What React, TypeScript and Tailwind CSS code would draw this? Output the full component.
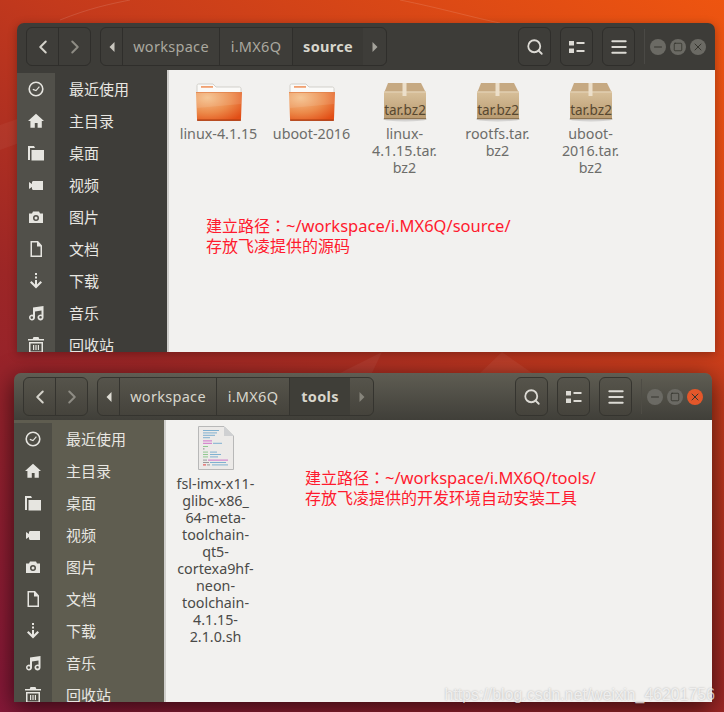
import { useId } from "react";
import { ChevronLeft, ChevronRight, Menu, Minus, Search, Square, X } from "lucide-react";

const PLACES = ["最近使用", "主目录", "桌面", "视频", "图片", "文档", "下载", "音乐", "回收站"];

function PlaceIcon({ index }: { index: number }) {
  const shapes = [
    <g key="recent">
      <circle cx="8" cy="8" r="6.8" fill="none" stroke="currentColor" strokeWidth="1.6" />
      <path d="M4.800 8.400 8 9.600l3.400-4" fill="none" stroke="currentColor" strokeWidth="1.200" />
    </g>,
    <path key="home" d="M8 .8 16 8h-2.200v6.800H9.600V10H6.800v4.800H2.400V8H0z" fill="currentColor" />,
    <path key="desk" d="M0 1h6l1 2h-5v12H0zM3.500 5H16v10.500H3.500z" fill="currentColor" />,
    <path key="video" d="M1 5l3 2V5.500C4 4.700 4.600 4 5.400 4H15v9H5.400C4.600 13 4 12.300 4 11.500V10l-3 2z" fill="currentColor" />,
    <path key="camera" fillRule="evenodd" d="M5 2.500h6L12 4.500h3V14H1V4.500h3zM8 6a3 3 0 1 0 0 6 3 3 0 0 0 0-6zm0 1.500a1.500 1.500 0 1 1 0 3 1.500 1.500 0 0 1 0-3z" fill="currentColor" />,
    <path key="doc" fillRule="evenodd" d="M2.500 0H10l4 4.500V16H2.500zM4 1.500v13h8.500V5.500H9v-4z" fill="currentColor" />,
    <g key="down" fill="currentColor">
      <rect x="7" y="0" width="2" height="2" />
      <rect x="7" y="3.500" width="2" height="2" />
      <path d="M7 7h2v4.500L12.500 8 14 9.500 8 15.500 2 9.500 3.500 8 7 11.500z" />
    </g>,
    <path key="music" fillRule="evenodd" d="M5 2.500 15.500 1v11.500a3 3 0 1 1-2-2.800V5.500L7 6.500v6a3 3 0 1 1-2-2.800zM3.800 11.300a1.300 1.300 0 1 0 0 2.600 1.300 1.300 0 0 0 0-2.600zm8.700-.3a1.300 1.300 0 1 0 0 2.600 1.300 1.300 0 0 0 0-2.600z" fill="currentColor" />,
    <path key="trash" fillRule="evenodd" d="M5.500 0h5l.8 2H16v1.500H0V2h4.700zM1 5h14v11H1zM2.500 6.500v8h11v-8zM5 8h1.200v5H5zm2.400 0h1.200v5H7.400zm2.400 0H11v5H9.800z" fill="currentColor" />,
  ];
  return (
    <svg viewBox="0 0 16 16" className="h-4 w-4 text-[#e6e5e0]">
      {shapes[index]}
    </svg>
  );
}

function FolderIcon() {
  const id = useId();
  return (
    <svg viewBox="0 0 46 38" className="h-[38px] w-[46px]">
      <defs>
        <radialGradient id={id} cx="0.25" cy="0.2" r="0.95">
          <stop offset="0" stopColor="#f4c08a" />
          <stop offset="0.55" stopColor="#ec8a4a" />
          <stop offset="1" stopColor="#e24e16" />
        </radialGradient>
      </defs>
      <path d="M1 2.500c0-.8.600-1.500 1.500-1.500H17l3 3h23.500c.8 0 1.500.7 1.500 1.500V12H1z" fill="#fbfaf8" stroke="#c9c6c0" strokeWidth="0.8" />
      <rect x="5" y="3" width="12" height="1.800" fill="#f0a070" />
      <path d="M0 9h46l-1 27c0 1-.8 1.800-1.800 1.800H2.800C1.800 37.800 1 37 1 36z" fill={`url(#${id})`} />
      <path d="M.3 10h45.400l-.5 11L1 25z" fill="#fff" opacity="0.1" />
      <path d="M0 9h46v.8H0z" fill="#e08550" />
      <path d="M1 36.500h44v1.300H1z" fill="#a83a10" />
    </svg>
  );
}

function ArchiveIcon() {
  const id = useId();
  return (
    <svg viewBox="0 0 44 40" className="h-10 w-11">
      <defs>
        <linearGradient id={id} x1="0" y1="0" x2="0" y2="1">
          <stop offset="0" stopColor="#d8c09a" />
          <stop offset="1" stopColor="#b89a70" />
        </linearGradient>
      </defs>
      <ellipse cx="22" cy="37" rx="22" ry="2.500" fill="#000" opacity="0.12" />
      <path d="M5 1h33l4.500 9h-41z" fill="#c6a982" />
      <rect x="1" y="9.500" width="42" height="27.500" fill={`url(#${id})`} />
      <rect x="1" y="9.500" width="42" height="1" fill="#e6d6bc" />
      <rect x="19.500" y="1" width="4" height="13" fill="#ecdfca" />
      <rect x="1" y="36" width="42" height="1.200" fill="#8d7350" />
      <text x="22" y="33" textAnchor="middle" className="fill-[#57472f] font-['Noto_Sans',sans-serif] text-[13.500px]">
        tar.bz2
      </text>
    </svg>
  );
}

function ScriptIcon() {
  const lines: [number, number, number, string][] = [
    [5, 5, 16, "#7fb0d0"], [5, 8, 14, "#7fb0d0"], [5, 11, 12, "#7fb0d0"], [5, 14, 7, "#7fb0d0"],
    [5, 18, 9, "#d070c8"], [5, 21, 9, "#d070c8"], [15, 21, 9, "#7fb0d0"], [5, 25, 5, "#90c890"], [5, 28, 1.500, "#888888"],
    [5, 32, 5, "#90c890"], [12, 32, 7, "#7fb0d0"], [5, 35, 5, "#90c890"], [12, 35, 11, "#7fb0d0"],
    [5, 38, 5, "#90c890"], [12, 38, 8, "#7fb0d0"], [5, 42, 4, "#999999"], [10, 42, 20, "#d070c8"],
    [5, 45, 6, "#999999"], [12, 45, 16, "#7fb0d0"], [5, 48, 3, "#e04040"], [9, 48, 3, "#999999"], [14, 48, 16, "#7fb0d0"],
  ];
  return (
    <svg viewBox="0 0 36 44" className="h-11 w-9">
      <path d="M.500.500H26L35.500 10v33.500H.500z" fill="#eceae8" stroke="#b8b8b8" />
      <path d="M26 .500V10h9.500z" fill="#cfd0d2" />
      {lines.map(([x, y, w, c], i) => (
        <rect key={i} x={x} y={y * 0.8} width={w} height="1" fill={c} />
      ))}
    </svg>
  );
}

function ViewIcon() {
  return (
    <svg viewBox="0 0 16 16" className="h-4 w-4 text-[#dcdad4]">
      <path d="M0 2h5v4.500H0zM0 9.500h5V14H0zM7.500 3h8v2h-8zM7.500 11h8v2h-8z" fill="currentColor" />
    </svg>
  );
}

function PathArrow({ dir, className }: { dir: "left" | "right"; className: string }) {
  return (
    <svg viewBox="0 0 6 10" className={`h-2.5 w-1.5 ${className}`}>
      <path d={dir === "left" ? "M5.500 0v10L.5 5z" : "M.5 0v10l5-5z"} fill="currentColor" />
    </svg>
  );
}

type Item = { name: string[]; kind: "folder" | "archive" | "script" };

type WindowProps = {
  focused: boolean;
  current: string;
  currentWidth: string;
  items: Item[];
  left: string;
  top: string;
  note: [string, string];
  notePos: string;
};

function FileWindow({ focused, current, currentWidth, items, left, top, note, notePos }: WindowProps) {
  const border = focused ? "border-[#35342f]" : "border-[#2f2e2b]";
  const fill = focused ? "bg-[linear-gradient(#56544b,#45433c)]" : "bg-[#3e3d39]";
  const pathText = focused ? "text-[#d8d6cc]" : "text-[#aaa89f]";
  const btn = `flex h-[39px] w-[33px] items-center justify-center rounded-md border ${border} ${fill}`;

  return (
    <section className={`absolute ${left} ${top} flex h-[329px] w-[698px] flex-col overflow-hidden rounded-t-[7px] font-['Noto_Sans','Noto_Sans_CJK_SC',sans-serif] ${focused ? "shadow-[0_6px_24px_rgba(0,0,0,0.65)]" : "shadow-[0_2px_10px_rgba(0,0,0,0.3)]"}`}>
      {/* Header */}
      <header className={`flex h-[47px] shrink-0 items-center pl-[9px] pr-[9px] ${focused ? "bg-[linear-gradient(#5f5d53,#403f39)]" : "bg-[#3d3c38]"}`}>
        <div className={`flex h-[39px] w-[65px] rounded-md border ${border} ${fill}`}>
          <span className={`flex flex-1 items-center justify-center border-r ${border}`}>
            <ChevronLeft className="h-[22px] w-[22px] text-[#d4d2ca]" strokeWidth={2.2} />
          </span>
          <span className="flex flex-1 items-center justify-center">
            <ChevronRight className="h-[22px] w-[22px] text-[#8e8c84]" strokeWidth={2.2} />
          </span>
        </div>

        <nav className={`ml-[9px] flex h-[39px] rounded-md border ${border} ${fill} text-[14.500px] tracking-[0.3px]`}>
          <span className={`flex w-[22px] items-center justify-center border-r ${border}`}>
            <PathArrow dir="left" className={focused ? "text-[#dedcd4]" : "text-[#c9c7bf]"} />
          </span>
          <span className={`flex w-[97px] items-center justify-center border-r ${border} ${pathText}`}>workspace</span>
          <span className={`flex w-[73px] items-center justify-center border-r ${border} ${pathText}`}>i.MX6Q</span>
          <span className={`flex ${currentWidth} items-center justify-center font-bold text-[#d8d6cc] ${focused ? "bg-[#3f3e38]" : "bg-[#3a3935]"}`}>{current}</span>
          <span className="flex w-[23px] items-center justify-center">
            <PathArrow dir="right" className={focused ? "text-[#87857c]" : "text-[#a5a39b]"} />
          </span>
        </nav>

        <div className="ml-auto flex items-center">
          <span className={btn}><Search className="h-[18px] w-[18px] text-[#dcdad4]" strokeWidth={2.4} /></span>
          <span className={`${btn} ml-[9px]`}><ViewIcon /></span>
          <span className={`${btn} ml-[9px]`}><Menu className="h-[20px] w-[20px] text-[#dcdad4]" strokeWidth={2.4} /></span>
          <span className={`ml-[9px] h-[35px] w-px ${focused ? "bg-[#4e4c45]" : "bg-[#4a4945]"}`} />
          <div className="ml-[5px] flex gap-1">
            <span className="flex h-4 w-4 items-center justify-center rounded-full bg-[#6b6a64]"><Minus className="h-3 w-3 text-[#36352f]" /></span>
            <span className="flex h-4 w-4 items-center justify-center rounded-full bg-[#6b6a64]"><Square className="h-2.5 w-2.5 text-[#36352f]" /></span>
            <span className={`flex h-4 w-4 items-center justify-center rounded-full ${focused ? "bg-[#e4572a]" : "bg-[#6b6a64]"}`}><X className="h-3 w-3 text-[#36352f]" /></span>
          </div>
        </div>
      </header>

      <div className="flex min-h-0 flex-1">
        {/* Sidebar */}
        <aside className={`flex w-[150px] shrink-0 flex-col overflow-hidden pt-[3px] text-[15px] ${focused ? "bg-[#5f5d50]" : "bg-[#3e3d39]"}`}>
          {PLACES.map((place, i) => (
            <div key={place} className="flex h-8 shrink-0 items-center">
              <span className={`flex h-8 w-[38px] shrink-0 items-center justify-center ${focused ? "bg-[#4e4d45]" : "bg-[#51504a]"}`}>
                <PlaceIcon index={i} />
              </span>
              <span className="pl-[14px] text-[#e8e7e2]">{place}</span>
            </div>
          ))}
        </aside>
        <div className="w-0.5 shrink-0 bg-[#cfcecb]" />

        {/* Files */}
        <main className="relative flex flex-1 items-start bg-[#f2f1ef] pl-[3px] pt-[11px] text-[14.300px] leading-[17px]">
          {items.map((item) => (
            <div key={item.name.join("")} className={`flex w-[93px] shrink-0 flex-col items-center text-center ${focused ? "text-[#4a4a48]" : "text-[#6d6d6a]"}`}>
              {item.kind === "script" ? (
                <div className="-mt-[5px] flex h-11 items-center"><ScriptIcon /></div>
              ) : (
                <div className="flex h-[42px] items-center">
                  {item.kind === "folder" ? <FolderIcon /> : <ArchiveIcon />}
                </div>
              )}
              <div className={item.kind === "script" ? "mt-[5px]" : "mt-[2px]"}>
                {item.name.map((line, i) => <div key={i}>{line}</div>)}
              </div>
            </div>
          ))}
          <div className={`absolute ${notePos} text-[16px] leading-5 text-[#ff1a2e]`}>
            <div>
              建立路径<span className="font-['Noto_Sans_CJK_TC',sans-serif]">：</span>
              <span className="text-[16.500px]">{note[0]}</span>
            </div>
            <div>{note[1]}</div>
          </div>
        </main>
      </div>
    </section>
  );
}

export default function App() {
  return (
    <div className="relative h-[712px] w-[724px] overflow-hidden bg-[linear-gradient(212deg,#ee5510_0%,#c43a1c_36%,#9c2626_62%,#851838_100%)]">
      {/* Wallpaper streaks */}
      <svg viewBox="0 0 724 712" className="absolute inset-0 h-full w-full">
        <path d="M0 125 100 90 55 130 0 150z" fill="#fff" opacity="0.04" />
        <path d="M60 20C90 8 110 4 130 0" fill="none" stroke="#fff" strokeWidth="1" opacity="0.12" />
        <path d="M400 0c40 8 75 18 100 23" fill="none" stroke="#fff" strokeWidth="1" opacity="0.12" />
        <path d="M340 373 382 352 372 373zM480 373l22-21 30 21z" fill="#fff" opacity="0.05" />
      </svg>
      <FileWindow
        focused={false}
        left="left-[17px]"
        top="top-[23px]"
        current="source"
        currentWidth="w-[70px]"
        items={[
          { name: ["linux-4.1.15"], kind: "folder" },
          { name: ["uboot-2016"], kind: "folder" },
          { name: ["linux-", "4.1.15.tar.", "bz2"], kind: "archive" },
          { name: ["rootfs.tar.", "bz2"], kind: "archive" },
          { name: ["uboot-", "2016.tar.", "bz2"], kind: "archive" },
        ]}
        note={["~/workspace/i.MX6Q/source/", "存放飞凌提供的源码"]}
        notePos="left-[37px] top-[145px]"
      />
      <FileWindow
        focused
        left="left-[14px]"
        top="top-[373px]"
        current="tools"
        currentWidth="w-[60px]"
        items={[
          {
            name: ["fsl-imx-x11-", "glibc-x86_", "64-meta-", "toolchain-", "qt5-", "cortexa9hf-", "neon-", "toolchain-", "4.1.15-", "2.1.0.sh"],
            kind: "script",
          },
        ]}
        note={["~/workspace/i.MX6Q/tools/", "存放飞凌提供的开发环境自动安装工具"]}
        notePos="left-[139px] top-[47px]"
      />
      <div className="absolute right-[9px] top-[683px] font-['Liberation_Sans',sans-serif] text-[15.700px] tracking-[0.1px] text-white/70 [text-shadow:0_0_2px_rgba(0,0,0,0.28)]">
        https://blog.csdn.net/weixin_46201756
      </div>
    </div>
  );
}
